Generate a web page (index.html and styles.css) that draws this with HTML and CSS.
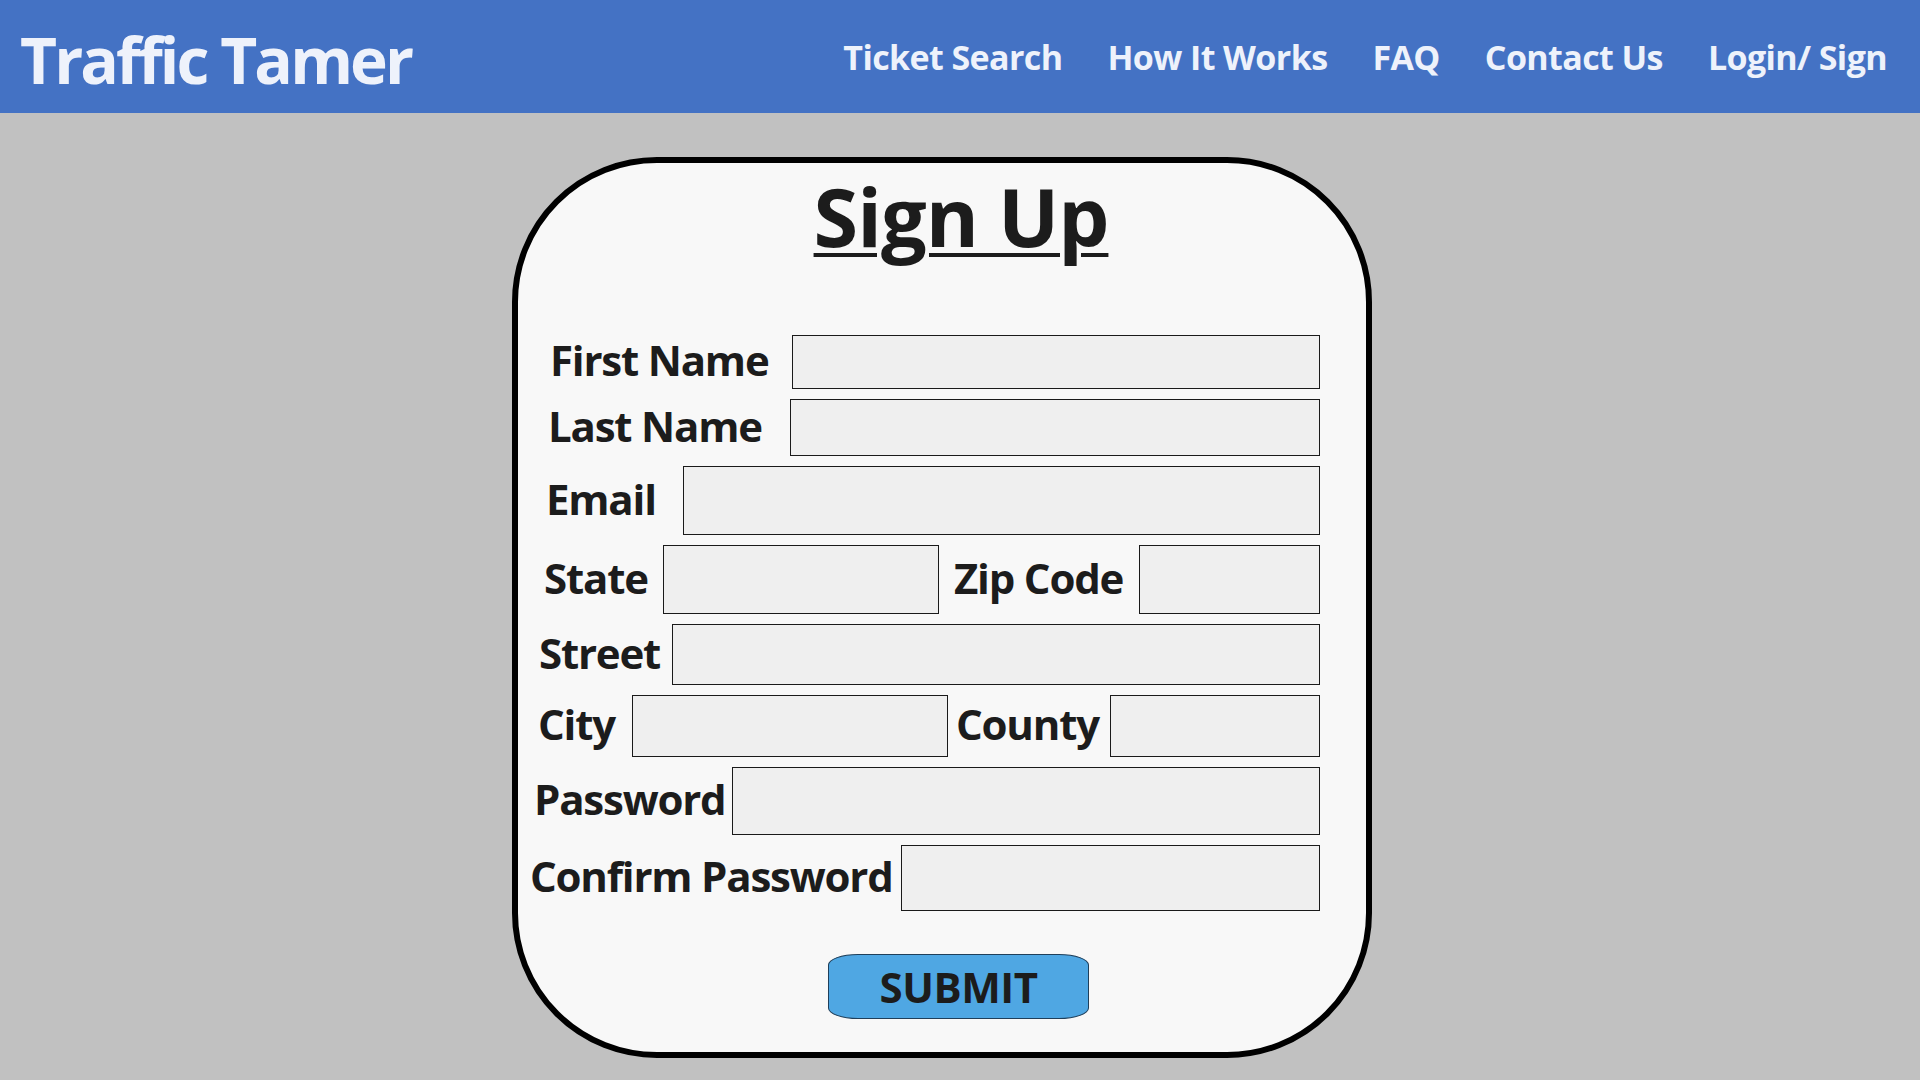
FILE: index.html
```html
<!DOCTYPE html>
<html lang="en">
<head>
<meta charset="utf-8">
<title>Traffic Tamer - Sign Up</title>
<link rel="stylesheet" href="styles.css">
</head>
<body>
<header class="topbar">
  <div class="brand">Traffic Tamer</div>
  <nav class="nav">
    <a class="nav-link" href="#">Ticket Search</a>
    <a class="nav-link" href="#">How It Works</a>
    <a class="nav-link" href="#">FAQ</a>
    <a class="nav-link" href="#">Contact Us</a>
    <a class="nav-link" href="#">Login/ Sign</a>
  </nav>
</header>
<main class="page">
  <form class="card">
    <h1 class="title">Sign Up</h1>
    <div class="fields">
      <div class="row row-first"><label class="lbl lbl-first">First Name</label><input class="box" type="text"></div>
      <div class="row row-last"><label class="lbl lbl-last">Last Name</label><input class="box" type="text"></div>
      <div class="row row-email"><label class="lbl lbl-email">Email</label><input class="box" type="text"></div>
      <div class="row row-state"><label class="lbl lbl-state">State</label><input class="box box-state" type="text"><label class="lbl lbl-zip">Zip Code</label><input class="box" type="text"></div>
      <div class="row row-street"><label class="lbl lbl-street">Street</label><input class="box" type="text"></div>
      <div class="row row-city"><label class="lbl lbl-city">City</label><input class="box box-city" type="text"><label class="lbl lbl-county">County</label><input class="box" type="text"></div>
      <div class="row row-pass"><label class="lbl lbl-pass">Password</label><input class="box" type="password"></div>
      <div class="row row-confirm"><label class="lbl lbl-confirm">Confirm Password</label><input class="box" type="password"></div>
    </div>
    <button class="submit" type="button">SUBMIT</button>
  </form>
</main>
</body>
</html>
```

FILE: styles.css
```css
html {
  background: #c1c1c1;
}
body {
  margin: 0;
  background: #c1c1c1;
  font-family: "Open Sans", "Noto Sans", sans-serif;
  color: #1c1c1c;
}
.topbar {
  height: 113px;
  background: #4472c4;
  display: flex;
  align-items: flex-start;
  padding: 0 33px 0 20px;
}
.brand {
  margin-top: 28px;
  font-size: 64px;
  line-height: 1;
  font-weight: 700;
  letter-spacing: -2.9px;
  color: #eef2fb;
  white-space: nowrap;
}
.nav {
  margin-left: auto;
  margin-top: 40px;
  display: flex;
  gap: 45px;
}
.nav-link {
  font-size: 34px;
  line-height: 1;
  font-weight: 700;
  letter-spacing: -0.6px;
  color: #eef2fb;
  text-decoration: none;
  white-space: nowrap;
}
.page {
  padding-top: 44px;
  padding-bottom: 24px;
}
.card {
  box-sizing: border-box;
  width: 860px;
  margin-left: 512px;
  border: 6px solid #000;
  border-radius: 145px;
  background: #f8f8f8;
  padding-bottom: 33px;
  display: flex;
  flex-direction: column;
}
.title {
  margin: 12px 0 0;
  padding-left: 38px;
  text-align: center;
  font-size: 81px;
  line-height: 1;
  font-weight: 700;
  letter-spacing: -1px;
  color: #1c1c1c;
  text-decoration: underline;
  text-decoration-thickness: 4px;
  text-underline-offset: 6px;
}
.fields {
  margin-top: 79px;
  display: flex;
  flex-direction: column;
  gap: 10px;
}
.row {
  display: flex;
  align-items: center;
  margin-right: 46px;
}
.lbl {
  flex: none;
  font-size: 42px;
  line-height: 1;
  font-weight: 700;
  letter-spacing: -1.2px;
  padding-bottom: 4px;
  white-space: nowrap;
  color: #1c1c1c;
}
.box {
  flex: 1;
  min-width: 0;
  height: 100%;
  box-sizing: border-box;
  margin: 0;
  padding: 0;
  border: 1px solid #1a1a1a;
  background: #efefef;
}
.row-first { padding-left: 32px; height: 54px; }
.lbl-first { width: 242px; }
.row-last { padding-left: 30px; height: 57px; }
.lbl-last { width: 242px; }
.row-email { padding-left: 28px; height: 69px; }
.lbl-email { width: 137px; }
.row-state { padding-left: 26px; height: 69px; }
.lbl-state { width: 119px; }
.box-state { flex: none; width: 276px; }
.lbl-zip { width: 185px; margin-left: 15px; }
.row-street { padding-left: 21px; height: 61px; }
.lbl-street { width: 133px; }
.row-city { padding-left: 20px; height: 62px; }
.lbl-city { width: 94px; }
.box-city { flex: none; width: 316px; }
.lbl-county { width: 154px; margin-left: 8px; }
.row-pass { padding-left: 16px; height: 68px; }
.lbl-pass { width: 198px; }
.row-confirm { padding-left: 12px; height: 66px; }
.lbl-confirm { width: 371px; }
.submit {
  align-self: flex-start;
  margin: 43px 0 0 310px;
  width: 261px;
  height: 65px;
  box-sizing: border-box;
  border: 1px solid #1f3f5a;
  border-radius: 30px / 11px;
  background: #4fa7e3;
  font-family: "Open Sans", "Noto Sans", sans-serif;
  font-size: 42px;
  font-weight: 700;
  letter-spacing: -0.5px;
  line-height: 1;
  color: #1c1c1c;
  padding: 0;
}
```
